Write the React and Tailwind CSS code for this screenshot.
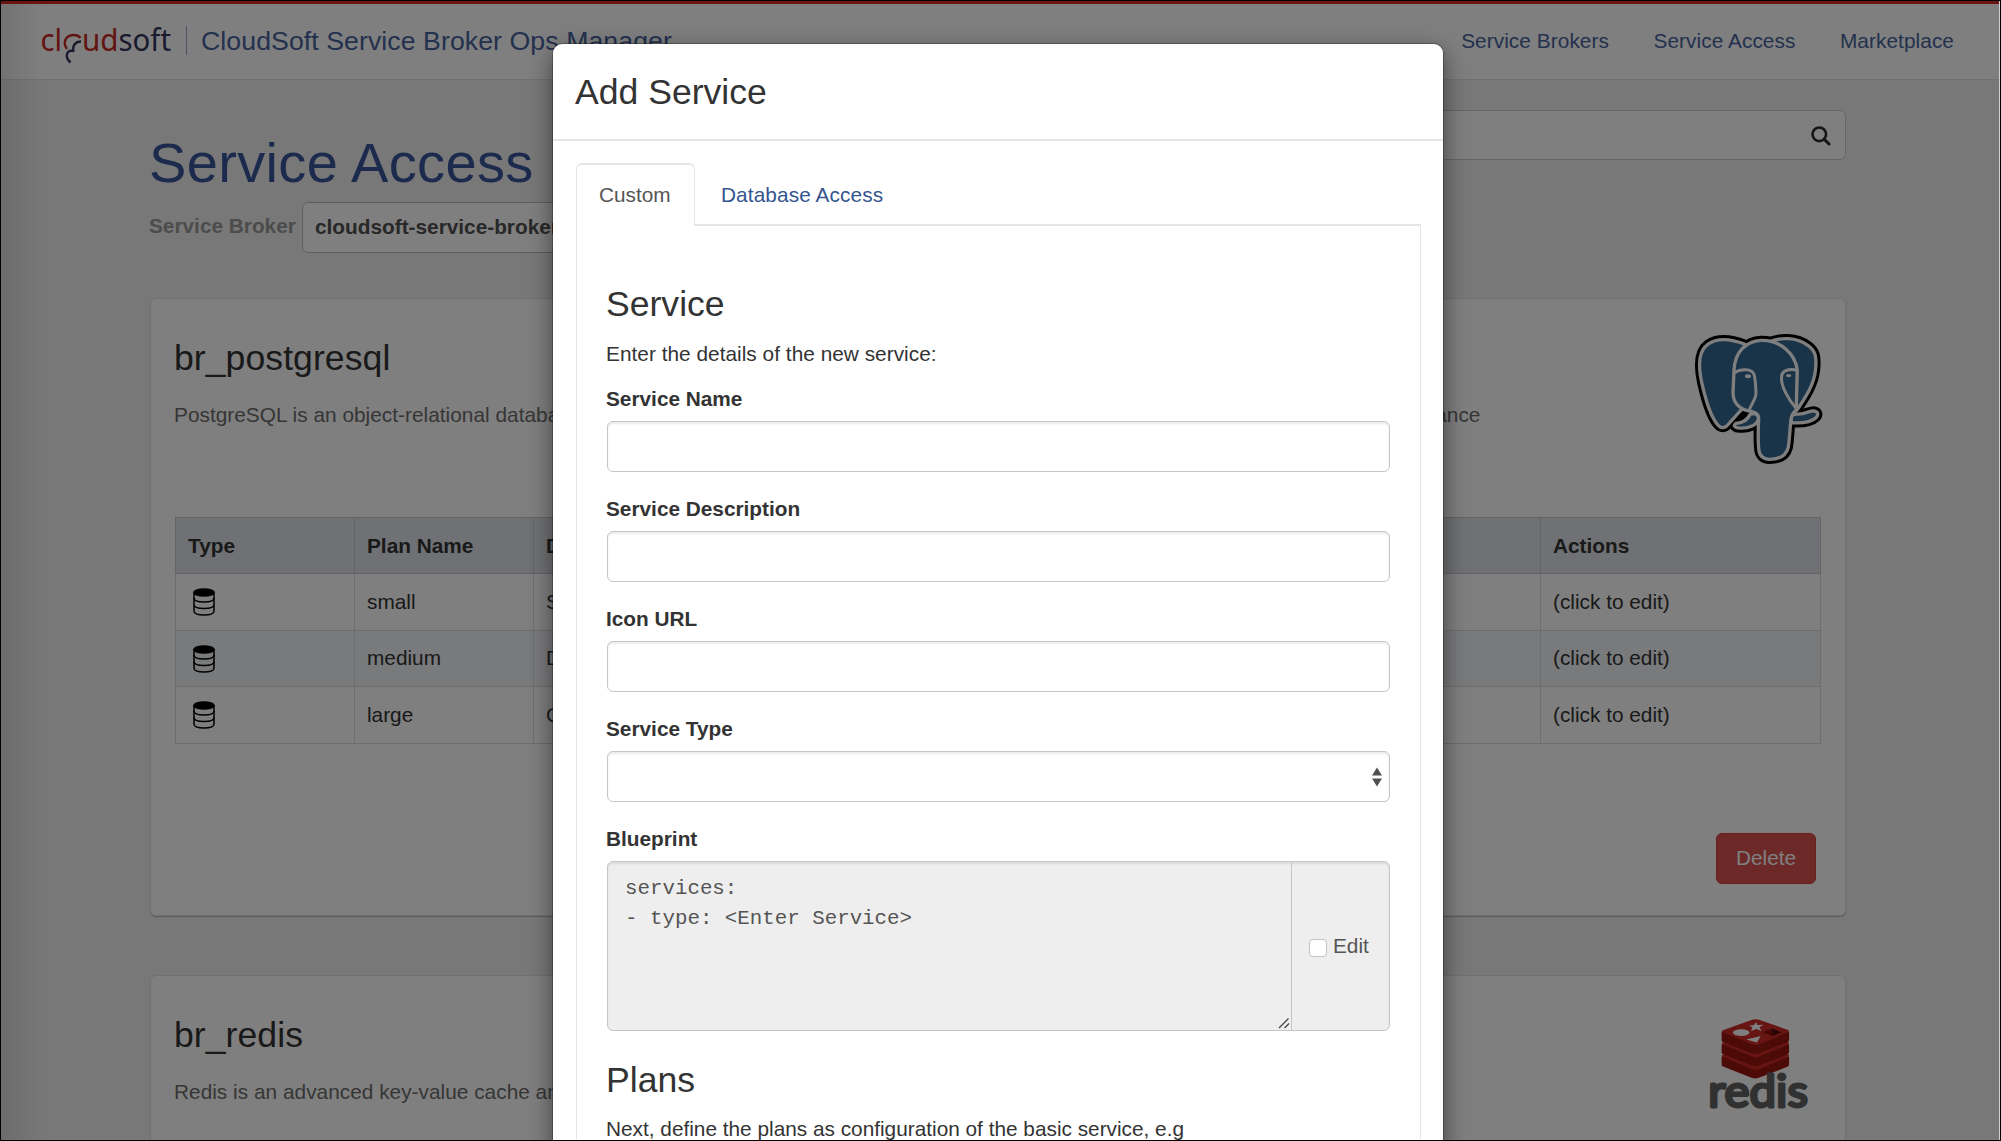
import React from "react";

const ELEPHANT = [
  "M196 74 C150 56 110 56 84 74 C56 94 54 136 66 190 C78 244 96 294 112 314 C122 328 136 328 146 314 L186 270 Z",
  "M272 66 C300 54 350 50 386 78 C408 94 412 112 408 150 C404 196 376 236 352 272 Z",
  "M236 300 C238 288 228 278 212 284 C200 306 186 310 168 312 C158 320 168 326 180 326 C206 328 230 318 236 300 Z",
  "M334 300 C336 286 342 282 356 284 C380 284 388 274 402 274 C416 276 418 286 410 294 C396 308 370 312 336 310 Z",
  "M206 274 C180 268 158 250 160 214 L163 150 C166 96 200 64 244 62 C302 60 348 104 353 152 L350 272 C338 280 336 290 334 300 C330 340 330 360 326 384 C320 408 300 420 270 420 C250 420 238 408 237 386 C234 350 236 330 237 296 C236 280 224 278 206 274 Z",
];

function PostgresLogo() {
  return (
    <svg viewBox="40 40 390 400" className="h-[133px] w-[130px]" strokeLinejoin="round" strokeLinecap="round">
      {ELEPHANT.map((d) => (
        <path key={d} d={d} fill="#000" stroke="#000" strokeWidth="28" />
      ))}
      {ELEPHANT.map((d) => (
        <path key={d} d={d} fill="#336791" stroke="#fff" strokeWidth="10" />
      ))}
      <path d="M204 284 L182 282 L168 298 C184 300 196 296 204 284Z" fill="#000" />
      <path d="M163 160 C184 146 216 148 223 164 C228 180 228 200 229 224 C226 244 214 254 208 274" fill="none" stroke="#fff" strokeWidth="9" />
      <path d="M353 152 C330 146 308 152 306 170 C302 200 330 244 348 264" fill="none" stroke="#fff" strokeWidth="9" />
      <ellipse cx="205" cy="170" rx="9" ry="6" fill="#fff" />
      <ellipse cx="327" cy="168" rx="8" ry="5" fill="#fff" />
    </svg>
  );
}

function RedisLogo() {
  return (
    <svg viewBox="36 24 310 284" className="h-[95px] w-[103px]">
      {[74, 37, 0].map((dy) => (
        <g key={dy} transform={`translate(0 ${dy})`}>
          <path d="M80 68 L80 92 Q80 97 86 99 L172 133 Q181 136 190 133 L278 99 Q283 96 283 92 L283 68 Z" fill="#9a1611" strokeLinejoin="round" />
          <path d="M84 63 L172 31 Q182 28 192 31 L280 62 Q286 65 280 69 L192 106 Q182 110 172 106 L84 69 Q77 66 84 63Z" fill="#cc2a24" />
        </g>
      ))}
      <ellipse cx="139" cy="70" rx="25" ry="10" fill="#fff" />
      <path d="M183 38 L188 47 L206 46 L194 54 L200 65 L184 59 L168 66 L173 55 L162 49 L178 47 Z" fill="#fff" />
      <path d="M154 91 L198 80 L186 100 Z" fill="#fff" />
      <path d="M204 69 L233 58 L233 80 Z" fill="#8a0f0a" />
      <path d="M233 58 L260 69 L233 80 Z" fill="#4a0806" />
      <text x="40" y="295" textLength="300" lengthAdjust="spacingAndGlyphs" fontFamily="Lato" fontWeight="400" fontSize="136" fill="#636363" stroke="#636363" strokeWidth="9" strokeLinejoin="round">redis</text>
    </svg>
  );
}

function CloudsoftLogo() {
  return (
    <svg viewBox="0 0 160 60" className="h-[60px] w-[160px]" fontFamily="Noto Sans" fontSize="31">
      <text x="10.500" y="35.500" textLength="21.500" lengthAdjust="spacingAndGlyphs" fill="#c62a22">cl</text>
      <text x="52" y="35.500" textLength="36.500" lengthAdjust="spacingAndGlyphs" fill="#c62a22">ud</text>
      <text x="88.500" y="35.500" textLength="52.500" lengthAdjust="spacingAndGlyphs" fill="#34345e">soft</text>
      <path d="M37 34 C32 27 36 20 44 20 C47 20 49 21 50.500 23" fill="none" stroke="#c62a22" strokeWidth="2.400" />
      <path d="M51 26.500 C46 26.500 42 30 43.500 37 M43.500 35.500 C36 35 34.500 42 40.500 47.500" fill="none" stroke="#34345e" strokeWidth="2.400" />
    </svg>
  );
}

function DatabaseIcon() {
  return (
    <svg viewBox="0 0 22 28" className="ml-[5px] mt-px h-[28px] w-[22px]" fill="none" stroke="#000" strokeWidth="1.500">
      <path d="M1 4.500 V23 C1 28.300 21 28.300 21 23 V4.500" />
      <path d="M1 10 C1 15.300 21 15.300 21 10 M1 16.500 C1 21.800 21 21.800 21 16.500" />
      <ellipse cx="11" cy="4.500" rx="10" ry="3.600" fill="#000" />
    </svg>
  );
}

function SearchIcon() {
  return (
    <svg viewBox="0 0 20 20" className="mt-px h-5 w-5" fill="none" stroke="#2b2b2b" strokeWidth="2.600">
      <circle cx="8.300" cy="8.300" r="6.800" />
      <path d="M13.200 13.200 L18 18" strokeLinecap="round" strokeWidth="3" />
    </svg>
  );
}

function Header() {
  return (
    <header className="flex h-[79px] items-start border-t-[3px] border-b border-t-[#d42a20] border-b-[#e2e2e2] bg-white text-[#48629c]">
      <div className="mt-[11px] ml-[29px] flex">
        <CloudsoftLogo />
      </div>
      <div className="-ml-[4px] mt-[22px] h-[29px] w-px bg-[#98a5c6]" />
      <div className="ml-[14px] mt-[19px] text-[26.7px] leading-[36px] tracking-[0.06px]">CloudSoft Service Broker Ops Manager</div>
      <nav className="mt-[22px] mr-[45px] ml-auto flex gap-[44.5px] text-[20.8px] leading-[30px] tracking-[0.07px]">
        <span>Service Brokers</span>
        <span>Service Access</span>
        <span>Marketplace</span>
      </nav>
    </header>
  );
}

const PLANS = [
  ["small", "S"],
  ["medium", "D"],
  ["large", "C"],
];

function PlanTable() {
  return (
    <table className="mt-[87px] ml-[24px] w-[1646px] table-fixed border-collapse text-left">
      <colgroup>
        <col className="w-[179px]" />
        <col className="w-[179px]" />
        <col className="w-[1007px]" />
        <col />
      </colgroup>
      <thead>
        <tr className="h-[56px] bg-[#e0e3e8]">
          {["Type", "Plan Name", "Description", "Actions"].map((h) => (
            <th key={h} className="border border-[#c8c9ce] px-3 py-0 font-bold">{h}</th>
          ))}
        </tr>
      </thead>
      <tbody>
        {PLANS.map(([name, desc]) => (
          <tr key={name} className="h-[56.500px] even:bg-[#f2f5f9]">
            <td className="border border-[#dddddf] p-0 pl-3"><DatabaseIcon /></td>
            <td className="border border-[#dddddf] px-3 py-0">{name}</td>
            <td className="border border-[#dddddf] px-3 py-0">{desc}</td>
            <td className="border border-[#dddddf] px-3 py-0">(click to edit)</td>
          </tr>
        ))}
      </tbody>
    </table>
  );
}

function ServiceCard({ title, description, logo, children }) {
  return (
    <section className="relative h-[618px] rounded-[6px] border border-[#e3e3e3] bg-white shadow-[0_1px_1px_rgba(0,0,0,0.25)]">
      <h2 className="mt-[39px] ml-[23px] text-[35.6px] leading-[40px] tracking-[0.06px]">{title}</h2>
      <p className="mt-[22px] ml-[23px] tracking-[0.025px] whitespace-nowrap text-[#6d6d6d]">{description}</p>
      {logo}
      {children}
    </section>
  );
}

function Page() {
  return (
    <div className="h-[1139px] w-[1998px] overflow-hidden bg-[#f1f1f1]">
      <Header />
      <main className="ml-[149px] w-[1696px]">
        <div className="flex h-[218px] items-start justify-between">
          <div className="mt-[50px]">
            <h1 className="-ml-px text-[56px] leading-[66px] tracking-[0.35px] text-[#38559a]">Service Access</h1>
            <div className="mt-[6px] flex font-bold">
              <span className="mt-[9px] -ml-px w-[153px] text-[#999]">Service Broker</span>
              <span className="h-[51px] rounded-[6px] border border-[#bbb] bg-white pt-[9px] pr-16 pl-[12px] text-[#505050]">cloudsoft-service-broker</span>
            </div>
          </div>
          <div className="mt-[30px] flex h-[50px] w-[560px] items-center justify-end rounded-[6px] border border-[#ccc] bg-white pr-[14px]">
            <SearchIcon />
          </div>
        </div>
        <div className="flex flex-col gap-[59px]">
          <ServiceCard
            title="br_postgresql"
            description="PostgreSQL is an object-relational database management system (ORDBMS) with an emphasis on extensibility and on standards-compliance"
            logo={<div className="absolute top-[34px] right-[22px]"><PostgresLogo /></div>}
          >
            <PlanTable />
            <div className="mt-[89px] mr-[29px] flex justify-end">
              <button className="h-[51px] w-[100px] rounded-[6px] border border-[#d43f3a] bg-[#d9534f] text-white">Delete</button>
            </div>
          </ServiceCard>
          <ServiceCard
            title="br_redis"
            description="Redis is an advanced key-value cache and store"
            logo={<div className="absolute top-[41px] right-[35px]"><RedisLogo /></div>}
          />
        </div>
      </main>
    </div>
  );
}

function Field({ label, children }) {
  return (
    <div className="mb-[21px] flex flex-col">
      <label className="-ml-px mt-px mb-[7px] font-bold">{label}</label>
      {children}
    </div>
  );
}

const INPUT = "h-[51px] rounded-[6px] border border-[#c6c6c6] bg-white shadow-[inset_0_2px_2px_rgba(0,0,0,0.08)]";

function AddServiceModal() {
  return (
    <div className="absolute top-[43px] left-[552px] h-[1120px] w-[890px] rounded-[9px] bg-white shadow-[0_0_0_1px_rgba(0,0,0,0.25),0_8px_24px_rgba(0,0,0,0.5)]">
      <div className="h-[97px] border-b-2 border-[#e5e5e5] pt-[28px] pl-[22px]">
        <h2 className="text-[35.6px] leading-[40px]">Add Service</h2>
      </div>
      <div className="pt-[22px] pr-[22px] pl-[23px]">
        <div className="flex">
          <div className="h-[63px] w-[119px] rounded-t-[6px] border-x border-t-2 border-[#e5e5e5] pt-[15px] pl-[22px] text-[#555]">Custom</div>
          <div className="h-[63px] grow border-b-2 border-[#e5e5e5] pt-[17px] pl-[26px] tracking-[0.1px] text-[#34558f]">Database Access</div>
        </div>
        <div className="border-x border-[#e5e5e9] px-[30px] pt-[58px] pb-8">
          <h3 className="-ml-px text-[35.6px] leading-[40px]">Service</h3>
          <p className="-ml-px mt-[15px] mb-[14px] tracking-[0.03px]">Enter the details of the new service:</p>
          <Field label="Service Name"><div className={INPUT} /></Field>
          <Field label="Service Description"><div className={INPUT} /></Field>
          <Field label="Icon URL"><div className={INPUT} /></Field>
          <Field label="Service Type">
            <div className="flex h-[51px] items-center justify-end rounded-[6px] border border-[#c6c6c6] bg-white pr-[7px] shadow-[inset_0_2px_2px_rgba(0,0,0,0.08)]">
              <svg viewBox="0 0 10 20" className="h-5 w-[10px]" fill="#505050">
                <path d="M0 8.500 L5 0.500 L10 8.500Z M0 11.500 L5 19.500 L10 11.500Z" />
              </svg>
            </div>
          </Field>
          <Field label="Blueprint">
            <div className="flex h-[170px] rounded-[6px] border border-[#c6c6c6] bg-[#eee] text-[#555] shadow-[inset_0_2px_2px_rgba(0,0,0,0.08)]">
              <div className="flex w-[684px] items-end justify-between border-r border-[#c6c6c6] pl-[17px]">
                <pre className="self-start pt-[12px] font-['Liberation_Mono'] text-[20.8px] leading-[30px]">{"services:\n- type: <Enter Service>"}</pre>
                <svg viewBox="0 0 12 12" className="mr-[1px] mb-[1px] h-3 w-3" stroke="#444" strokeWidth="1.300">
                  <path d="M1 11 L10.500 1.500 M6.500 11 L11 6.500" />
                </svg>
              </div>
              <div className="mt-[69px] flex pl-[17px]">
                <div className="mt-[8px] mr-[6px] h-[18px] w-[18px] rounded-[4px] border border-[#c4c4c4] bg-white" />
                Edit
              </div>
            </div>
          </Field>
          <h3 className="-ml-px mt-[29px] text-[35.6px] leading-[40px]">Plans</h3>
          <p className="-ml-px mt-[14px]">Next, define the plans as configuration of the basic service, e.g</p>
        </div>
      </div>
    </div>
  );
}

export default function App() {
  return (
    <div className="relative h-[1141px] w-[2001px] overflow-hidden border border-black bg-[#d0d0d0] font-['Liberation_Sans',Arial,sans-serif] text-[20.8px] leading-[30px] text-[#333]">
      <Page />
      <div className="absolute top-0 left-0 h-[1139px] w-[1998px] bg-black/50" />
      <div className="absolute top-[3px] left-0 h-[1136px] w-[44px] bg-linear-to-r from-black/10 to-transparent" />
      <AddServiceModal />
    </div>
  );
}
